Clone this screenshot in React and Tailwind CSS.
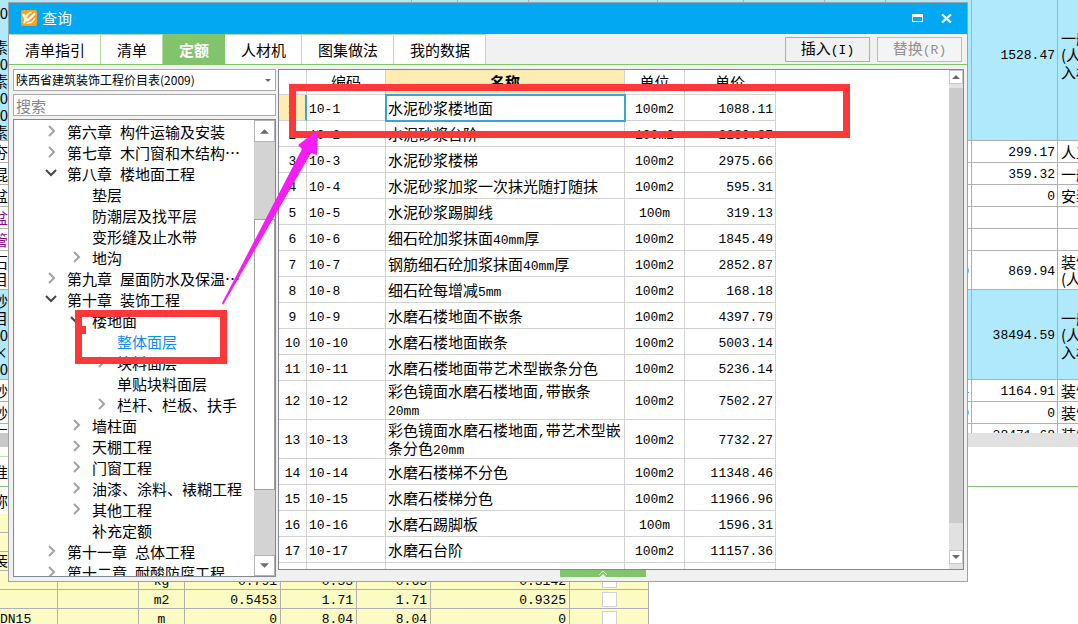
import React from "react";
import { clsx } from "clsx";

const COST_ROWS = [
  {
    h: "h-[172px]",
    left: ["土石方工程 回填土 2-48 zg 前", "", "0", "", "素", "0", "素", "0", "0", "素"],
    rate: ":", total: "1528.47", note: ["一般土建", "(人工土方", "入材料"], blue: true,
  },
  { h: "h-[22px]", left: ["夯"], rate: ":", total: "299.17", note: ["人工土方"] },
  { h: "h-[22px]", left: ["混"], rate: "", total: "359.32", note: ["一般土建"] },
  { h: "h-[22px]", left: ["盆"], rate: ":", total: "0", note: ["安装工程"] },
  { h: "h-[22px]", left: ["盆"], purple: true },
  { h: "h-[22px]", left: ["管"], purple: true },
  { h: "h-[39px]", left: ["石", "目"], rate: "0", total: "869.94", note: ["装饰工程", "(人工)"] },
  {
    h: "h-[90px]",
    left: ["砂", "目", "0", "×", "0"],
    rate: "", total: "38494.59", note: ["一般土建", "(人工土方", "入材料"], blue: true,
  },
  { h: "h-[22px]", left: ["砂"], rate: "4", total: "1164.91", note: ["装饰工程"] },
  { h: "h-[22px]", left: ["砂"], rate: "0", total: "0", note: ["装饰工程"] },
  { h: "h-[22px]", left: ["石"], rate: "", total: "38471.68", note: ["装饰工程"] },
];

const MATERIALS = [
  { name: "", unit: "", values: ["", "", "", ""] },
  { name: "", unit: "", values: ["", "", "", ""] },
  { name: "装", unit: "", values: ["", "", "", ""] },
  { name: "", unit: "kg", values: ["0.791", "0.53", "0.63", "0.3142"], check: true },
  { name: "", unit: "m2", values: ["0.5453", "1.71", "1.71", "0.9325"], check: true },
  { name: "DN15", unit: "m", values: ["0", "8.04", "8.04", "0"], check: true },
];

const TABS = ["清单指引", "清单", "定额", "人材机", "图集做法", "我的数据"];

const TREE = [
  { level: 1, state: "closed", chapter: "第六章", label: "构件运输及安装" },
  { level: 1, state: "closed", chapter: "第七章", label: "木门窗和木结构⋯" },
  { level: 1, state: "open", chapter: "第八章", label: "楼地面工程" },
  { level: 2, label: "垫层" },
  { level: 2, label: "防潮层及找平层" },
  { level: 2, label: "变形缝及止水带" },
  { level: 2, state: "closed", label: "地沟" },
  { level: 1, state: "closed", chapter: "第九章", label: "屋面防水及保温⋯" },
  { level: 1, state: "open", chapter: "第十章", label: "装饰工程" },
  { level: 2, state: "open", label: "楼地面" },
  { level: 3, label: "整体面层", active: true },
  { level: 3, state: "closed", label: "块料面层" },
  { level: 3, label: "单贴块料面层" },
  { level: 3, state: "closed", label: "栏杆、栏板、扶手" },
  { level: 2, state: "closed", label: "墙柱面" },
  { level: 2, state: "closed", label: "天棚工程" },
  { level: 2, state: "closed", label: "门窗工程" },
  { level: 2, state: "closed", label: "油漆、涂料、裱糊工程" },
  { level: 2, state: "closed", label: "其他工程" },
  { level: 2, label: "补充定额" },
  { level: 1, state: "closed", chapter: "第十一章", label: "总体工程" },
  { level: 1, state: "closed", chapter: "第十二章", label: "耐酸防腐工程" },
];

const INDENT = { 1: "pl-[29px]", 2: "pl-[54px]", 3: "pl-[79px]" };

const QUOTAS = [
  ["10-1", "水泥砂浆楼地面", "100m2", "1088.11"],
  ["10-2", "水泥砂浆台阶", "100m2", "2280.87"],
  ["10-3", "水泥砂浆楼梯", "100m2", "2975.66"],
  ["10-4", "水泥砂浆加浆一次抹光随打随抹", "100m2", "595.31"],
  ["10-5", "水泥砂浆踢脚线", "100m", "319.13"],
  ["10-6", "细石砼加浆抹面40mm厚", "100m2", "1845.49"],
  ["10-7", "钢筋细石砼加浆抹面40mm厚", "100m2", "2852.87"],
  ["10-8", "细石砼每增减5mm", "100m2", "168.18"],
  ["10-9", "水磨石楼地面不嵌条", "100m2", "4397.79"],
  ["10-10", "水磨石楼地面嵌条", "100m2", "5003.14"],
  ["10-11", "水磨石楼地面带艺术型嵌条分色", "100m2", "5236.14"],
  ["10-12", "彩色镜面水磨石楼地面,带嵌条20mm", "100m2", "7502.27"],
  ["10-13", "彩色镜面水磨石楼地面,带艺术型嵌条分色20mm", "100m2", "7732.27"],
  ["10-14", "水磨石楼梯不分色", "100m2", "11348.46"],
  ["10-15", "水磨石楼梯分色", "100m2", "11966.96"],
  ["10-16", "水磨石踢脚板", "100m", "1596.31"],
  ["10-17", "水磨石台阶", "100m2", "11157.36"],
];

const MONO = "font-['Liberation_Mono','Noto_Sans_CJK_SC',monospace] text-[13px]";

// Latin runs are set in the narrow mono face, Chinese stays in the page font
function Mixed({ text }) {
  return text.split(/([\x20-\x7e]+)/).filter(Boolean).map((part, i) =>
    /^[\x20-\x7e]+$/.test(part) ? <span key={i} className={clsx(MONO, "leading-none")}>{part}</span> : part
  );
}

function CostTable() {
  const line = "border-r border-b border-[#b0b0b0] p-0";
  const number = clsx(line, MONO, "pt-[2px] pr-[2px] text-right leading-[17px]");
  return (
    <div className="h-[433px] shrink-0 overflow-hidden">
      <table className="-mt-[31px] w-full table-fixed border-separate border-spacing-0">
        <colgroup>
          <col />
          <col className="w-[46px]" />
          <col className="w-[71px]" />
          <col className="w-[129px]" />
          <col className="w-[86px]" />
          <col className="w-[81px]" />
          <col className="w-[61px]" />
          <col className="w-[86px]" />
          <col className="w-[86px]" />
          <col className="w-[20px]" />
        </colgroup>
        <tbody>
          {COST_ROWS.map((row, i) => (
            <tr key={i} className={clsx(row.h, row.blue ? "bg-[#afe9fb]" : "bg-white")}>
              <td className={line}>
                {row.left.map((text, n) => (
                  <div
                    key={n}
                    className={clsx(
                      "h-[17px] leading-[17px] whitespace-nowrap",
                      text.length > 1 ? "w-full" : "flex w-2 justify-end overflow-hidden",
                      row.purple && "text-[#8a0a8a]"
                    )}
                  >
                    {text}
                  </div>
                ))}
              </td>
              <td className={line} />
              <td className={line} />
              <td className={line} />
              <td className={line} />
              <td className={line} />
              <td className={line} />
              <td className={number}>{row.rate}</td>
              <td className={number}>{row.total}</td>
              <td className="overflow-hidden border-b border-[#b0b0b0] p-0 pl-[3px] leading-[17px] whitespace-nowrap">
                {row.note?.map((text) => <div key={text}>{text}</div>)}
              </td>
            </tr>
          ))}
        </tbody>
      </table>
    </div>
  );
}

function MaterialTable() {
  const line = "border-r border-b border-[#b0b0b0] p-0";
  const textLine = clsx(line, "pt-[3px]");
  return (
    <table className="w-[649px] table-fixed border-separate border-spacing-0 bg-[#fdfbc4]">
      <colgroup>
        <col className="w-[58px]" />
        <col className="w-[81px]" />
        <col className="w-[46px]" />
        <col className="w-[96px]" />
        <col className="w-[76px]" />
        <col className="w-[74px]" />
        <col className="w-[139px]" />
        <col className="w-[79px]" />
      </colgroup>
      <tbody>
        {MATERIALS.map((m, i) => (
          <tr key={i} className={clsx("h-[19px] leading-[15px]", MONO)}>
            <td className={textLine}>
              {m.name.length > 1 ? m.name : <div className="flex w-2 justify-end overflow-hidden text-[15px]">{m.name}</div>}
            </td>
            <td className={line} />
            <td className={clsx(textLine, "text-center")}>{m.unit}</td>
            {m.values.map((v, n) => (
              <td key={n} className={clsx(textLine, "pr-[3px] text-right")}>{v}</td>
            ))}
            <td className={line}>
              {m.check && (
                <input
                  type="checkbox"
                  aria-label={`${m.unit} 选择`}
                  className="mx-auto block size-[15px] appearance-none border border-[#d0d0d0] bg-white"
                />
              )}
            </td>
          </tr>
        ))}
      </tbody>
    </table>
  );
}

function Logo() {
  return (
    <svg viewBox="0 0 16 16" className="size-4" aria-hidden="true">
      <rect width="16" height="16" rx="2" fill="#f9a01f" />
      <path d="M1 4.6 3 3.4l1.6 2.2C6 3.6 8 2.2 10.4 1.6l.4 1C8.6 3.8 7 5.4 6 7.6l1 1L3.4 14 2 13l1.4-3.6z" fill="#fff4dc" />
      <path d="M13.4 2.4 15 4l-7.2 7-2.4.8.6-2.4z" fill="#fff" />
      <path d="M14.4 7.6c-.6 3.6-3.6 6.2-8.6 6.6l-.4-1.2c4-.6 6.2-2 7.6-4.2z" fill="#fff" />
    </svg>
  );
}

function Chevron({ state }) {
  if (!state) return <span className="w-4" />;
  return (
    <svg viewBox="0 0 16 16" className="size-4" fill="none" strokeWidth="2" aria-hidden="true">
      {state === "open"
        ? <path d="m3 4 5 5 5-5" stroke="#454545" />
        : <path d="m6 2 5 5-5 5" stroke="#a2a2a2" />}
    </svg>
  );
}

function Triangle({ up, className }) {
  return (
    <svg viewBox="0 0 8 4" className={className} aria-hidden="true">
      <path d={up ? "M0 4 4 0l4 4z" : "M0 0h8L4 4z"} fill="#686877" />
    </svg>
  );
}

function TreePanel() {
  return (
    <div className="flex w-[263px] shrink-0 flex-col">
      <div className="relative">
        <select
          aria-label="价目表"
          className="block h-[22px] w-full appearance-none border border-[#a9a9a9] bg-white pl-[2px] text-xs outline-none"
        >
          <option>陕西省建筑装饰工程价目表(2009)</option>
        </select>
        <Triangle className="pointer-events-none absolute top-[10px] right-[5px] h-[3px] w-[6px]" />
      </div>
      <input
        type="text"
        aria-label="搜索"
        placeholder="搜索"
        className="mt-[3px] h-[22px] w-full border border-[#a9a9a9] bg-white pl-[2px] outline-none placeholder:text-[#858585]"
      />
      <div className="mt-[3px] flex min-h-0 flex-1 overflow-hidden border border-[#828790] bg-white">
        <ul className="min-w-0 flex-1 overflow-hidden pt-px">
          {TREE.map((node) => (
            <li
              key={node.label}
              className={clsx("flex h-[21px] items-center whitespace-nowrap", INDENT[node.level], node.active && "text-[#0a8ff5]")}
            >
              <Chevron state={node.state} />
              <span className="ml-2 flex gap-2">
                {node.chapter && <span>{node.chapter}</span>}
                <span>{node.label}</span>
              </span>
            </li>
          ))}
        </ul>
        <div className="flex w-[21px] flex-col bg-[#d3d3d3]">
          <button type="button" aria-label="向上滚动" className="flex h-[22px] items-center justify-center border border-[#b4b4b4] bg-white">
            <Triangle up className="h-[5px] w-[9px]" />
          </button>
          <div className="grow-[77]" />
          <div className="grow-[271] border border-[#a0a0a0] bg-white" />
          <div className="grow-[65]" />
          <button type="button" aria-label="向下滚动" className="flex h-[21px] items-center justify-center border border-[#b4b4b4] bg-white">
            <Triangle className="h-[5px] w-[9px]" />
          </button>
        </div>
      </div>
    </div>
  );
}

function QuotaTable() {
  const line = "border-r border-b border-[#d2d2d2] p-0";
  const mono = clsx(line, MONO, "pt-[4px]");
  return (
    <div className="mb-[7px] flex min-h-0 min-w-0 flex-1 overflow-hidden border border-[#828790] bg-white">
      <div className="min-w-0 flex-1 overflow-hidden">
        <table className="w-[497px] table-fixed border-separate border-spacing-0">
          <colgroup>
            <col className="w-7" />
            <col className="w-[79px]" />
            <col className="w-[239px]" />
            <col className="w-[60px]" />
            <col className="w-[91px]" />
          </colgroup>
          <thead>
            <tr className="h-[25px]">
              <th className={line} />
              <th className={clsx(line, "font-normal")}>编码</th>
              <th className={clsx(line, "bg-[#ffecb3] font-bold")}>名称</th>
              <th className={clsx(line, "font-normal")}>单位</th>
              <th className={clsx(line, "font-normal")}>单价</th>
            </tr>
          </thead>
          <tbody>
            {QUOTAS.map(([code, name, unit, price], i) => (
              <tr key={code} className={name.length > 17 ? "h-[39px]" : "h-[26px]"}>
                <td className={clsx(mono, "text-center", i === 0 && "border-r-2 border-r-[#3aa6d0] bg-[#ffecb3]")}>{i + 1}</td>
                <td className={clsx(mono, "pl-[2px]")}>{code}</td>
                <td
                  className={clsx(
                    line,
                    "pr-[3px] pl-[2px] leading-[17px]",
                    i === 0 && "outline-2 outline-offset-[-1px] outline-[#3aa6d0]"
                  )}
                >
                  <Mixed text={name} />
                </td>
                <td className={clsx(mono, "text-center")}>{unit}</td>
                <td className={clsx(mono, "pr-[2px] text-right")}>{price}</td>
              </tr>
            ))}
            <tr className="h-[26px]">
              <td className={line} />
              <td className={line} />
              <td className={line} />
              <td className={line} />
              <td className={line} />
            </tr>
          </tbody>
        </table>
      </div>
      <div className="flex w-[14px] flex-col bg-[#e1e1e1] pb-[5px]">
        <button type="button" aria-label="向上滚动" className="flex h-[14px] items-center justify-center border border-[#c8c8c8] bg-white">
          <Triangle up className="h-1 w-2" />
        </button>
        <div className="grow-[4]" />
        <div className="grow-[436] bg-[#cbcbcb]" />
        <div className="grow-[27]" />
        <button type="button" aria-label="向下滚动" className="flex h-[14px] items-center justify-center border border-[#c8c8c8] bg-white">
          <Triangle className="h-1 w-2" />
        </button>
      </div>
    </div>
  );
}

function QueryDialog() {
  return (
    <section
      aria-label="查询"
      className="absolute top-[2px] right-[110px] bottom-[42px] left-2 flex flex-col border border-[#a0a0a0] bg-[#f1f1f1]"
    >
      <header className="flex h-[31px] shrink-0 items-center bg-[#02a9f2] pr-[15px] pb-px pl-3 text-white">
        <Logo />
        <h1 className="ml-[5px] flex-1">查询</h1>
        <button type="button" aria-label="最大化">
          <svg viewBox="0 0 11 8" className="h-2 w-[11px]" aria-hidden="true">
            <path d="M0 0h11v8H0zM1 3v4h9V3z" fill="#fff" fillRule="evenodd" />
          </svg>
        </button>
        <button type="button" aria-label="关闭" className="ml-[18px]">
          <svg viewBox="0 0 11 9" className="h-[9px] w-[11px]" aria-hidden="true">
            <path d="m1 .5 9 8M10 .5l-9 8" stroke="#fff" strokeWidth="2.2" />
          </svg>
        </button>
      </header>

      <div className="flex h-[31px] shrink-0 border-b border-[#82c46c] pr-[5px]">
        <nav className="flex">
          {TABS.map((tab) => (
            <button
              key={tab}
              type="button"
              className={clsx(
                "border-t border-r pr-[15px] pl-4",
                tab === "定额"
                  ? "border-[#82c46c] bg-[#82c46c] font-bold text-white"
                  : "border-[#b5e0a4] bg-white"
              )}
            >
              {tab}
            </button>
          ))}
        </nav>
        <div className="ml-auto flex items-center gap-[7px]">
          <button type="button" className="h-[25px] w-[85px] border border-[#adadad] bg-[#f1f1f1]">
            插入<span className={MONO}>(I)</span>
          </button>
          <button type="button" disabled className="h-[25px] w-[85px] border border-[#bcbcbc] bg-[#f4f4f4] text-[#909090]">
            替换<span className={MONO}>(R)</span>
          </button>
        </div>
      </div>

      <div className="flex min-h-0 flex-1 gap-[2px] pt-1 pr-[3px] pb-1 pl-1">
        <TreePanel />
        <QuotaTable />
      </div>

      <button
        type="button"
        aria-label="展开"
        className="absolute bottom-1 left-[551px] flex h-[7px] w-[86px] items-center justify-center bg-[#82c46c]"
      >
        <svg viewBox="0 0 10 7" className="h-[7px] w-[10px]" fill="none" aria-hidden="true">
          <path d="m1 5 4-4 4 4" stroke="#d9f0d0" />
          <path d="m2 7 3-3 3 3z" fill="#fff" />
        </svg>
      </button>
    </section>
  );
}

function Marks() {
  return (
    <div className="pointer-events-none" aria-hidden="true">
      <div className="absolute top-[84px] left-[289px] h-[54px] w-[561px] border-[7px] border-[#fc3838]" />
      <div className="absolute top-[310px] left-[75px] h-[54px] w-[152px] border-[7px] border-[#fc3838]">
        <div className="mt-[9px] h-2 w-1 bg-[#fc3838]" />
      </div>
      <svg viewBox="0 0 100 178" className="absolute top-[129px] left-[220px] h-[178px] w-[100px]">
        <path d="M98 1 78 16l4 4L2 174l1 2L91 24l6 2z" fill="#f51cf5" />
      </svg>
    </div>
  );
}

export default function App() {
  return (
    <main className="relative flex h-screen flex-col overflow-hidden bg-white font-['Noto_Sans_CJK_SC',sans-serif] text-[15px] leading-5 font-normal text-black">
      <CostTable />
      <div className="flex h-[14px] shrink-0 bg-[#e1e1e1]">
        <div className="w-1/2 bg-[#c9c9c9]" />
      </div>
      <div className="mt-[9px] h-[31px] shrink-0 border-b border-[#82c46c]">
        <div className="h-full w-1/2 border-t border-[#b5e0a4]">
          <div className="flex h-full w-2 items-center justify-end overflow-hidden">准</div>
        </div>
      </div>
      <div className="flex h-[27px] w-2 shrink-0 items-center justify-end overflow-hidden">称</div>
      <MaterialTable />
      <QueryDialog />
      <Marks />
    </main>
  );
}
